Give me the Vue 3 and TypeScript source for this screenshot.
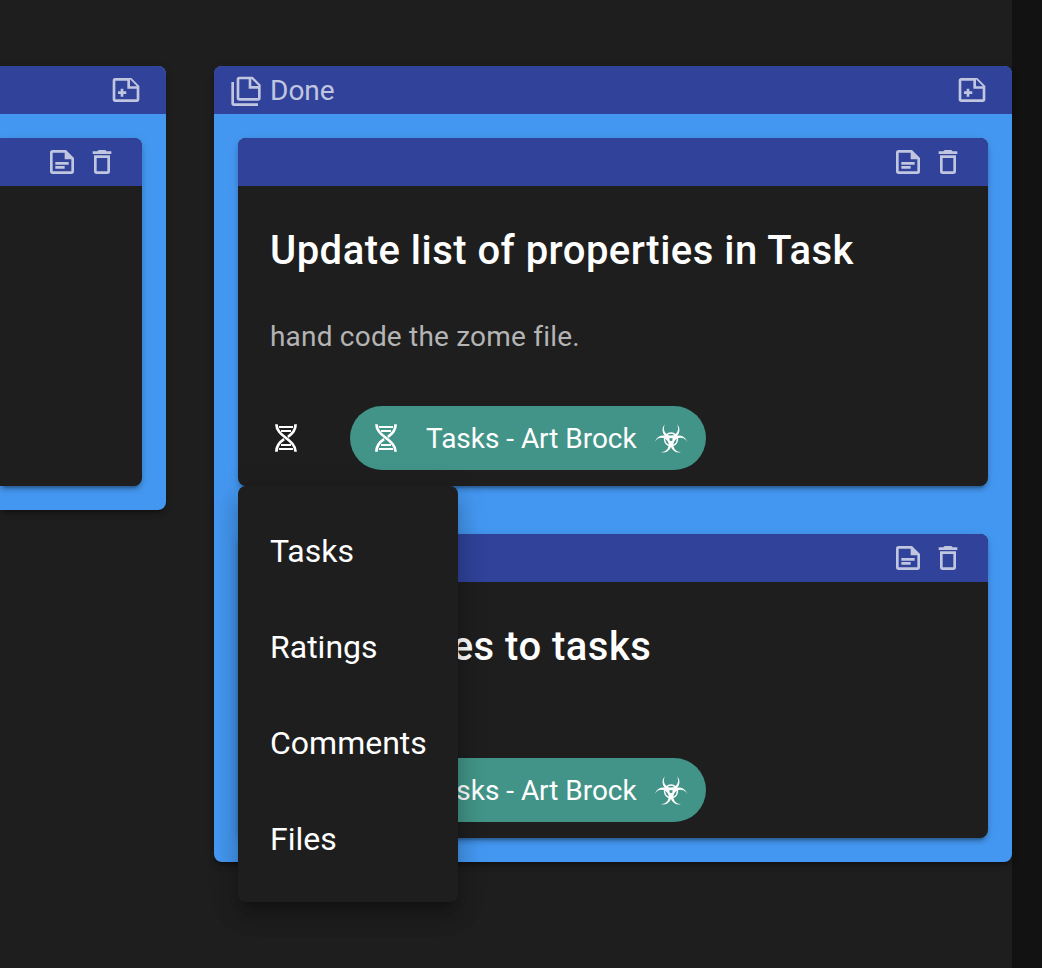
<script setup lang="ts">
interface Task { title: string; body: string; name: string }

const doneTasks: Task[] = [
  { title: 'Update list of properties in Task', body: 'hand code the zome file.', name: 'Tasks - Art Brock' },
  { title: 'Add profiles to tasks', body: '', name: 'Tasks - Art Brock' },
]
const menuItems: string[] = ['Tasks', 'Ratings', 'Comments', 'Files']

const icons = {
  notePlus:
    'M16 3H4A2 2 0 0 0 2 5V19A2 2 0 0 0 4 21H20A2 2 0 0 0 22 19V9ZM20 19H4V5H13V11H20ZM15 4L20.2 9.2H15ZM8 11H10V13H12.2V15H10V17H8V15H6V13H8Z',
  noteText:
    'M15 3H5A2 2 0 0 0 3 5V19A2 2 0 0 0 5 21H19A2 2 0 0 0 21 19V9ZM19 19H5V5H14V10H19ZM7 12H17V14H7ZM7 15H14V17H7Z',
  trash:
    'M6 19A2 2 0 0 0 8 21H16A2 2 0 0 0 18 19V7H6ZM8 9H16V19H8ZM15.5 4L14.5 3H9.5L8.5 4H5V6H19V4Z',
  noteStack:
    'M3 6V22H21V24H3A2 2 0 0 1 1 22V6ZM16 9H21.5L16 3.5ZM7 2H17L23 8V18A2 2 0 0 1 21 20H7A2 2 0 0 1 5 18V4A2 2 0 0 1 7 2ZM7 4V18H21V11H14V4Z',
}
const hazardHorn = 'M-5.8 -15.3A8.5 8.5 0 1 0 5.8 -15.3A7.2 7.2 0 1 1 -5.8 -15.3Z'
</script>

<template>
  <main class="board">
    <section class="column previous">
      <header class="column-bar">
        <svg class="icon add" viewBox="0 0 24 24"><path :d="icons.notePlus" /></svg>
      </header>
      <article class="card tall">
        <header class="card-bar">
          <svg class="icon" viewBox="0 0 24 24"><path :d="icons.noteText" /></svg>
          <svg class="icon" viewBox="0 0 24 24"><path :d="icons.trash" /></svg>
        </header>
      </article>
    </section>

    <section class="column done">
      <header class="column-bar">
        <svg class="icon stack" viewBox="0 0 24 24"><path :d="icons.noteStack" /></svg>
        <span class="column-name">Done</span>
        <svg class="icon add" viewBox="0 0 24 24"><path :d="icons.notePlus" /></svg>
      </header>
      <article v-for="task in doneTasks" :key="task.title" class="card">
        <header class="card-bar">
          <svg class="icon" viewBox="0 0 24 24"><path :d="icons.noteText" /></svg>
          <svg class="icon" viewBox="0 0 24 24"><path :d="icons.trash" /></svg>
        </header>
        <h2 class="title">{{ task.title }}</h2>
        <p v-if="task.body" class="body">{{ task.body }}</p>
        <footer class="actions" :class="{ compact: !task.body }">
          <svg class="dna" viewBox="0 0 24 28"><use href="#dna-shape" /></svg>
          <div class="chip">
            <svg class="dna" viewBox="0 0 24 28"><use href="#dna-shape" /></svg>
            <span class="chip-name">{{ task.name }}</span>
            <svg class="hazard" viewBox="0 0 36 32"><use href="#hazard-shape" /></svg>
          </div>
        </footer>
      </article>

      <nav class="menu">
        <div v-for="item in menuItems" :key="item" class="menu-item">{{ item }}</div>
      </nav>
    </section>

    <svg class="symbols" aria-hidden="true">
      <defs>
        <g id="dna-shape" fill="none" stroke="#fff">
          <path stroke-width="2.7" d="M2.4 .3C2.4 12.5 21.6 15.5 21.6 27.7" />
          <path stroke-width="2.7" d="M21.6 .3C21.6 7 17.8 10.3 13.9 12.8M10.1 15.2C6.2 17.7 2.4 21 2.4 27.7" />
          <path stroke-width="2" d="M5 3H19M7 7H17M7 21H17M5 25H19" />
        </g>
        <g id="hazard-shape" transform="translate(19 17.4)">
          <path
            v-for="angle in [0, 120, 240]"
            :key="angle"
            :d="hazardHorn"
            :transform="`rotate(${angle})`"
            fill="#fff"
          />
          <circle r="6.4" fill="none" stroke="#fff" stroke-width="1.5" />
          <circle r="1.5" fill="#429488" />
        </g>
      </defs>
    </svg>
  </main>
</template>

<style>
body { margin: 0; background: #121212; }
</style>

<style scoped>
.board {
  box-sizing: border-box;
  width: 1042px;
  height: 968px;
  padding-top: 66px;
  display: flex;
  align-items: flex-start;
  gap: 48px;
  overflow: hidden;
  background: linear-gradient(90deg, #1e1e1e 1012px, #121212 1012px);
  color: #fff;
  font-family: Roboto, sans-serif;
}
.column {
  position: relative;
  box-sizing: border-box;
  padding-bottom: 24px;
  border-radius: 8px;
  background: #4497f0;
  box-shadow: 0 6px 2px -4px rgba(0,0,0,.2), 0 4px 4px rgba(0,0,0,.14), 0 2px 10px rgba(0,0,0,.12);
}
.previous { width: 166px; border-radius: 0 8px 8px 0; }
.done { width: 798px; }
.column-bar {
  box-sizing: border-box;
  height: 48px;
  padding: 0 24px 0 16px;
  display: flex;
  align-items: center;
  border-radius: 8px 8px 0 0;
  background: #304299;
}
.previous .column-bar { border-radius: 0 8px 0 0; }
.icon { width: 32px; height: 32px; flex: none; fill: #c1c6e0; fill-rule: evenodd; }
.add { margin-left: auto; }
.stack { overflow: visible; }
.column-name { margin-left: 8px; padding-top: 2px; color: #c1c6e0; font-size: 28px; line-height: 40px; }
.card {
  margin: 24px 24px 0;
  border-radius: 8px;
  background: #1e1e1e;
  box-shadow: 0 6px 2px -4px rgba(0,0,0,.2), 0 4px 4px rgba(0,0,0,.14), 0 2px 10px rgba(0,0,0,.12);
}
.card + .card { margin-top: 48px; }
.tall { height: 348px; margin-left: 0; border-radius: 0 8px 8px 0; }
.card-bar {
  box-sizing: border-box;
  height: 48px;
  padding-right: 24px;
  display: flex;
  align-items: center;
  justify-content: flex-end;
  gap: 8px;
  border-radius: 8px 8px 0 0;
  background: #304299;
}
.tall .card-bar { border-radius: 0 8px 0 0; }
.title { margin: 0; padding: 33px 32px 0; font-size: 40px; font-weight: 500; line-height: 64px; letter-spacing: .48px; }
.card + .card .title { padding-left: 34px; }
.body { margin: 0; padding: 32px 32px 0; color: #b4b4b4; font-size: 28px; line-height: 44px; letter-spacing: .2px; }
.actions { display: flex; align-items: center; padding: 47px 36px 16px; }
.actions.compact { padding-top: 79px; }
.dna { width: 24px; height: 28px; flex: none; }
.chip {
  box-sizing: border-box;
  width: 356px;
  height: 64px;
  margin-left: 52px;
  padding-left: 24px;
  display: flex;
  align-items: center;
  border-radius: 32px;
  background: #429488;
}
.chip-name { width: 210px; margin-left: 28px; font-size: 28px; letter-spacing: -.03px; white-space: nowrap; }
.hazard { width: 36px; height: 32px; margin-left: 16px; flex: none; overflow: visible; }
.menu {
  position: absolute;
  top: 420px;
  left: 24px;
  box-sizing: border-box;
  width: 220px;
  height: 416px;
  padding: 16px 32px;
  border-radius: 8px;
  background: #1e1e1e;
  box-shadow: 0 10px 10px -6px rgba(0,0,0,.2), 0 16px 20px 2px rgba(0,0,0,.14), 0 6px 28px 4px rgba(0,0,0,.12);
}
.menu-item { height: 96px; font-size: 32px; line-height: 98px; }
.symbols { position: absolute; width: 0; height: 0; }
</style>
